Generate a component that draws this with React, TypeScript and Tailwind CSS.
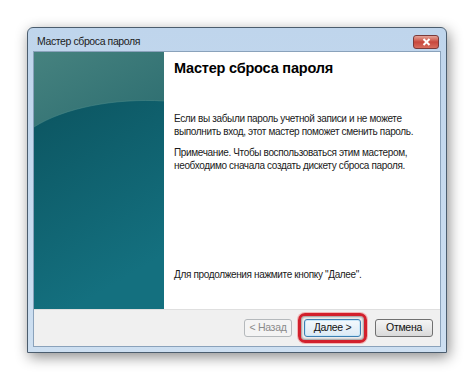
import React from "react"

function SidePanel() {
  return (
    <div className="w-[130px] h-full">
      <svg width="130" height="257" viewBox="0 0 130 257" className="block">
        <defs>
          <linearGradient id="top" x1="0" y1="0" x2="1" y2="1">
            <stop offset="0" stopColor="#46827f" />
            <stop offset="1" stopColor="#2c6d70" />
          </linearGradient>
          <linearGradient id="body" x1="0" y1="0" x2="0.3" y2="1">
            <stop offset="0" stopColor="#0a4f5a" />
            <stop offset="1" stopColor="#14707f" />
          </linearGradient>
        </defs>
        <rect width="130" height="257" fill="url(#body)" />
        <path d="M0 0 H130 V49 C80 46 30 56 0 75 Z" fill="url(#top)" />
        <path d="M0 75 C30 56 80 46 130 49" fill="none" stroke="#4f8d8c" strokeOpacity="0.5" strokeWidth="1" />
      </svg>
    </div>
  )
}

function Btn({ label, kind }: { label: string; kind: "disabled" | "default" | "normal" }) {
  if (kind === "disabled") {
    return (
      <div className="w-[48px] h-[18px] rounded-[3px] border border-[#b5b9bc] bg-[#f4f4f4] text-[#8a8a8a] flex items-center justify-center text-[10.5px] tracking-[-0.3px]">
        {label}
      </div>
    )
  }
  if (kind === "default") {
    return (
      <div className="w-[57px] h-[18px] rounded-[3px] border border-[#3c7fb1] bg-gradient-to-b from-[#f3f9fd] to-[#dceaf5] text-[#111] flex items-center justify-center text-[10.5px] tracking-[-0.3px] shadow-[inset_0_0_0_1px_#c8e6f8]">
        {label}
      </div>
    )
  }
  return (
    <div className="w-[58px] h-[18px] rounded-[3px] border border-[#707070] bg-gradient-to-b from-[#f4f4f4] via-[#e8e8e8] to-[#d9d9d9] text-[#111] flex items-center justify-center text-[10.5px] tracking-[-0.3px]">
      {label}
    </div>
  )
}

export default function App() {
  return (
    <div className="w-[474px] h-[380px] bg-white pt-[27px] pl-[27px] overflow-hidden" style={{ fontFamily: "'Liberation Sans', Arial, sans-serif" }}>
      <div className="w-[420px] h-[326px] rounded-t-[6px] border border-[#4b5d6e] bg-gradient-to-b from-[#bfd5ec] to-[#cddff1] shadow-[2px_4px_14px_rgba(0,0,0,0.45)] flex flex-col">
        <div className="h-[23px] flex items-center justify-between pl-[9px] pr-[7px]">
          <span className="text-[10.5px] tracking-[-0.4px] text-[#1b1b1b] pt-[4px]">Мастер сброса пароля</span>
          <div className="w-[26px] h-[14px] mt-[4px] rounded-[3px] border border-[#7a3a3a] bg-gradient-to-b from-[#e3a398] via-[#c8473d] to-[#d76c5e] flex items-center justify-center">
            <svg width="9" height="8" viewBox="0 0 9 8">
              <path d="M1.5 1 L7.5 7 M7.5 1 L1.5 7" stroke="white" strokeWidth="2" />
            </svg>
          </div>
        </div>
        <div className="mx-[5px] mb-[5px] flex-1 flex flex-col border border-[#8aa2bb] bg-[#f0f0f0]">
          <div className="h-[257px] flex bg-white">
            <SidePanel />
            <div className="flex-1 pl-[10px] pt-[6px] flex flex-col text-[10px] tracking-[-0.35px] text-[#1a1a1a] leading-[13px] whitespace-nowrap">
              <div className="text-[14.5px] font-bold text-black leading-[20px] tracking-[-0.2px]">Мастер сброса пароля</div>
              <div className="mt-[34px]">
                Если вы забыли пароль учетной записи и не можете
                <br />
                выполнить вход, этот мастер поможет сменить пароль.
              </div>
              <div className="mt-[8px]">
                Примечание. Чтобы воспользоваться этим мастером,
                <br />
                необходимо сначала создать дискету сброса пароля.
              </div>
              <div className="mt-auto mb-[28px]">Для продолжения нажмите кнопку "Далее".</div>
            </div>
          </div>
          <div className="flex-1 border-t border-[#dfdfdf] flex items-center justify-end pr-[7px]">
            <Btn label="< Назад" kind="disabled" />
            <div className="ml-[6px] mr-[8px] rounded-[7px] border-[3px] border-[#d2202c] p-[3px] shadow-[0_0_0_1px_#f2b4b4,inset_0_0_2px_1px_#9a9a9a]">
              <Btn label="Далее >" kind="default" />
            </div>
            <Btn label="Отмена" kind="normal" />
          </div>
        </div>
      </div>
    </div>
  )
}
